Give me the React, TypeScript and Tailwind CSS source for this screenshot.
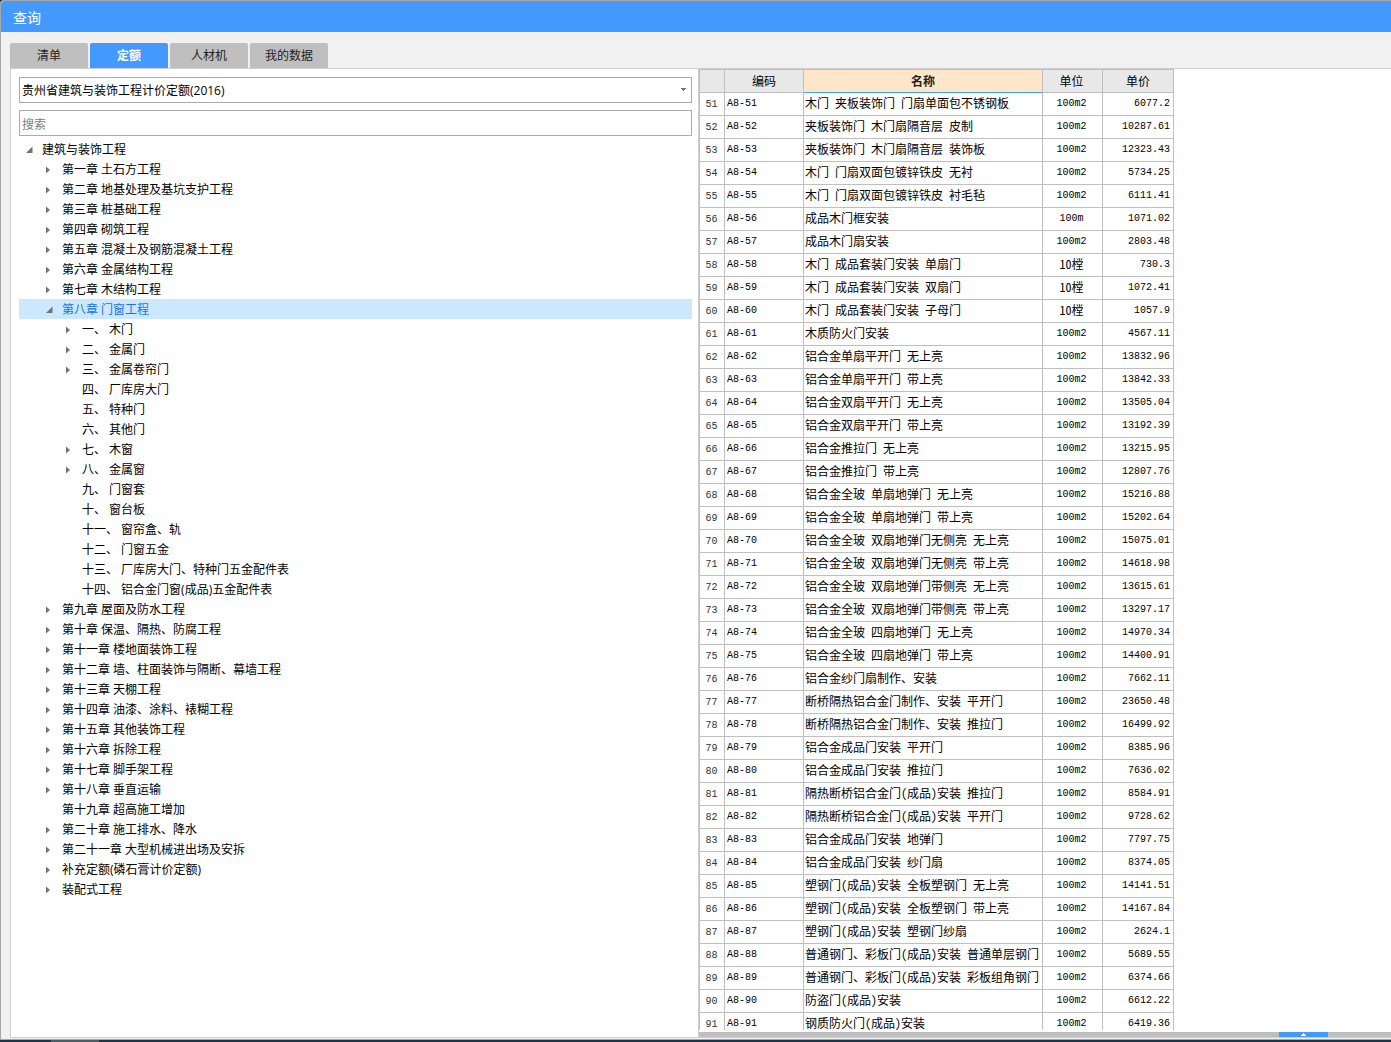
import clsx from "clsx";

const tabs = ["清单", "定额", "人材机", "我的数据"];

type Node = { label: string; level: 0 | 1 | 2; state?: "open" | "closed" };

const nodes: Node[] = [
  { label: "建筑与装饰工程", level: 0, state: "open" },
  { label: "第一章 土石方工程", level: 1, state: "closed" },
  { label: "第二章 地基处理及基坑支护工程", level: 1, state: "closed" },
  { label: "第三章 桩基础工程", level: 1, state: "closed" },
  { label: "第四章 砌筑工程", level: 1, state: "closed" },
  { label: "第五章 混凝土及钢筋混凝土工程", level: 1, state: "closed" },
  { label: "第六章 金属结构工程", level: 1, state: "closed" },
  { label: "第七章 木结构工程", level: 1, state: "closed" },
  { label: "第八章 门窗工程", level: 1, state: "open" },
  { label: "一、 木门", level: 2, state: "closed" },
  { label: "二、 金属门", level: 2, state: "closed" },
  { label: "三、 金属卷帘门", level: 2, state: "closed" },
  { label: "四、 厂库房大门", level: 2 },
  { label: "五、 特种门", level: 2 },
  { label: "六、 其他门", level: 2 },
  { label: "七、 木窗", level: 2, state: "closed" },
  { label: "八、 金属窗", level: 2, state: "closed" },
  { label: "九、 门窗套", level: 2 },
  { label: "十、 窗台板", level: 2 },
  { label: "十一、 窗帘盒、轨", level: 2 },
  { label: "十二、 门窗五金", level: 2 },
  { label: "十三、 厂库房大门、特种门五金配件表", level: 2 },
  { label: "十四、 铝合金门窗(成品)五金配件表", level: 2 },
  { label: "第九章 屋面及防水工程", level: 1, state: "closed" },
  { label: "第十章 保温、隔热、防腐工程", level: 1, state: "closed" },
  { label: "第十一章 楼地面装饰工程", level: 1, state: "closed" },
  { label: "第十二章 墙、柱面装饰与隔断、幕墙工程", level: 1, state: "closed" },
  { label: "第十三章 天棚工程", level: 1, state: "closed" },
  { label: "第十四章 油漆、涂料、裱糊工程", level: 1, state: "closed" },
  { label: "第十五章 其他装饰工程", level: 1, state: "closed" },
  { label: "第十六章 拆除工程", level: 1, state: "closed" },
  { label: "第十七章 脚手架工程", level: 1, state: "closed" },
  { label: "第十八章 垂直运输", level: 1, state: "closed" },
  { label: "第十九章 超高施工增加", level: 1 },
  { label: "第二十章 施工排水、降水", level: 1, state: "closed" },
  { label: "第二十一章 大型机械进出场及安拆", level: 1, state: "closed" },
  { label: "补充定额(磷石膏计价定额)", level: 1, state: "closed" },
  { label: "装配式工程", level: 1, state: "closed" },
];

const selected = "第八章 门窗工程";

const indent = ["pl-[3px]", "pl-[23px]", "pl-[43px]"];

// row number, name, unit, price
const rows: [number, string, string, string][] = [
  [51, "木门 夹板装饰门 门扇单面包不锈钢板", "100m2", "6077.2"],
  [52, "夹板装饰门 木门扇隔音层 皮制", "100m2", "10287.61"],
  [53, "夹板装饰门 木门扇隔音层 装饰板", "100m2", "12323.43"],
  [54, "木门 门扇双面包镀锌铁皮 无衬", "100m2", "5734.25"],
  [55, "木门 门扇双面包镀锌铁皮 衬毛毡", "100m2", "6111.41"],
  [56, "成品木门框安装", "100m", "1071.02"],
  [57, "成品木门扇安装", "100m2", "2803.48"],
  [58, "木门 成品套装门安装 单扇门", "10樘", "730.3"],
  [59, "木门 成品套装门安装 双扇门", "10樘", "1072.41"],
  [60, "木门 成品套装门安装 子母门", "10樘", "1057.9"],
  [61, "木质防火门安装", "100m2", "4567.11"],
  [62, "铝合金单扇平开门 无上亮", "100m2", "13832.96"],
  [63, "铝合金单扇平开门 带上亮", "100m2", "13842.33"],
  [64, "铝合金双扇平开门 无上亮", "100m2", "13505.04"],
  [65, "铝合金双扇平开门 带上亮", "100m2", "13192.39"],
  [66, "铝合金推拉门 无上亮", "100m2", "13215.95"],
  [67, "铝合金推拉门 带上亮", "100m2", "12807.76"],
  [68, "铝合金全玻 单扇地弹门 无上亮", "100m2", "15216.88"],
  [69, "铝合金全玻 单扇地弹门 带上亮", "100m2", "15202.64"],
  [70, "铝合金全玻 双扇地弹门无侧亮 无上亮", "100m2", "15075.01"],
  [71, "铝合金全玻 双扇地弹门无侧亮 带上亮", "100m2", "14618.98"],
  [72, "铝合金全玻 双扇地弹门带侧亮 无上亮", "100m2", "13615.61"],
  [73, "铝合金全玻 双扇地弹门带侧亮 带上亮", "100m2", "13297.17"],
  [74, "铝合金全玻 四扇地弹门 无上亮", "100m2", "14970.34"],
  [75, "铝合金全玻 四扇地弹门 带上亮", "100m2", "14400.91"],
  [76, "铝合金纱门扇制作、安装", "100m2", "7662.11"],
  [77, "断桥隔热铝合金门制作、安装 平开门", "100m2", "23650.48"],
  [78, "断桥隔热铝合金门制作、安装 推拉门", "100m2", "16499.92"],
  [79, "铝合金成品门安装 平开门", "100m2", "8385.96"],
  [80, "铝合金成品门安装 推拉门", "100m2", "7636.02"],
  [81, "隔热断桥铝合金门(成品)安装 推拉门", "100m2", "8584.91"],
  [82, "隔热断桥铝合金门(成品)安装 平开门", "100m2", "9728.62"],
  [83, "铝合金成品门安装 地弹门", "100m2", "7797.75"],
  [84, "铝合金成品门安装 纱门扇", "100m2", "8374.05"],
  [85, "塑钢门(成品)安装 全板塑钢门 无上亮", "100m2", "14141.51"],
  [86, "塑钢门(成品)安装 全板塑钢门 带上亮", "100m2", "14167.84"],
  [87, "塑钢门(成品)安装 塑钢门纱扇", "100m2", "2624.1"],
  [88, "普通钢门、彩板门(成品)安装 普通单层钢门", "100m2", "5689.55"],
  [89, "普通钢门、彩板门(成品)安装 彩板组角钢门", "100m2", "6374.66"],
  [90, "防盗门(成品)安装", "100m2", "6612.22"],
  [91, "钢质防火门(成品)安装", "100m2", "6419.36"],
];

function Arrow({ state }: { state?: "open" | "closed" }) {
  return (
    <span className="flex w-5 shrink-0 pl-1">
      {state && (
        <svg width="8" height="8" viewBox="0 0 8 8" fill="#737373">
          {state === "open" ? (
            <path d="M6.5 0.5V7H0z" />
          ) : (
            <path d="M0 0.5L4 4L0 7.5z" />
          )}
        </svg>
      )}
    </span>
  );
}

function Tree() {
  return (
    <ul role="tree" aria-label="定额章节" className="mt-[3px]">
      {nodes.map((node) => (
        <li
          key={node.label}
          role="treeitem"
          aria-level={node.level + 1}
          aria-expanded={node.state ? node.state === "open" : undefined}
          aria-selected={node.label === selected}
        >
          <button
            type="button"
            className={clsx(
              "flex h-5 w-full items-center pt-0.5 text-left whitespace-nowrap",
              indent[node.level],
              node.label === selected && "bg-[#cce8ff] text-[#1a73e8]",
            )}
          >
            <Arrow state={node.state} />
            {node.label}
          </button>
        </li>
      ))}
    </ul>
  );
}

const cell = "h-[23px] border-r border-b border-[#bfbfbf] p-0 leading-4";
const mono = "font-['Liberation_Mono','Noto_Sans_CJK_SC',monospace] text-[10px]";

function PriceTable() {
  return (
    <table className="w-[475px] table-fixed border-separate border-spacing-0 border-t border-l border-[#bfbfbf] font-['Noto_Sans_Mono_CJK_SC','Noto_Sans_CJK_SC',monospace] whitespace-nowrap">
      <colgroup>
        <col className="w-[25px]" />
        <col className="w-[79px]" />
        <col className="w-[239px]" />
        <col className="w-[60px]" />
        <col className="w-[71px]" />
      </colgroup>
      <thead>
        <tr className="bg-[#e8e8e8]">
          <td className={cell} />
          <th className={clsx(cell, "font-normal")}>编码</th>
          <th className="h-[23px] border-r border-b border-r-[#bfbfbf] border-b-[#4499ff] bg-[#ffe6c8] p-0 leading-4 font-bold text-[#222]">
            名称
          </th>
          <th className={clsx(cell, "pr-0.5 font-normal")}>单位</th>
          <th className={clsx(cell, "font-normal")}>单价</th>
        </tr>
      </thead>
      <tbody>
        {rows.map(([no, name, unit, price]) => (
          <tr key={no}>
            <td className={clsx(cell, mono, "pt-0.5 pr-px text-center text-[#333]")}>{no}</td>
            <td className={clsx(cell, mono, "pl-0.5")}>A8-{no}</td>
            <td className={clsx(cell, "pb-0.5 pl-px")}>{name}</td>
            <td
              className={clsx(
                cell,
                "pr-0.5 text-center",
                unit.endsWith("樘") ? "pb-0.5" : mono,
              )}
            >
              {unit}
            </td>
            <td className={clsx(cell, mono, "pr-[3px] text-right")}>{price}</td>
          </tr>
        ))}
      </tbody>
    </table>
  );
}

export default function App() {
  return (
    <div className="flex h-screen flex-col overflow-hidden bg-[#1f3444] font-['Open_Sans','Noto_Sans_CJK_SC',sans-serif] text-xs text-black">
      <div className="flex min-h-0 flex-1 flex-col rounded-tl-sm border-t border-b border-l border-[#a6a6a6] bg-[#f1f1f1]">
        <header className="flex h-[31px] shrink-0 items-center rounded-tl-sm bg-[#4499ff] px-3 pt-0.5">
          <h1 className="text-sm text-white">查询</h1>
        </header>
        <main className="flex min-h-0 flex-1 flex-col pt-[11px] pb-px pl-[9px]">
          <div role="tablist" className="flex h-[25px] shrink-0 gap-0.5">
            {tabs.map((tab) => (
              <button
                key={tab}
                type="button"
                role="tab"
                aria-selected={tab === "定额"}
                className={clsx(
                  "w-[78px] rounded-t-xs",
                  tab === "定额" ? "bg-[#4499ff] font-bold text-white" : "bg-[#bfbfbf] text-[#222]",
                )}
              >
                {tab}
              </button>
            ))}
          </div>
          <div className="grid min-h-0 flex-1 grid-cols-[687fr_693fr] border-t border-b border-l border-[#cfcfcf] bg-white">
            <section className="min-h-0 overflow-hidden pt-2 pr-1.5 pl-2">
              <div className="relative">
                <select
                  aria-label="定额库"
                  className="block h-[26px] w-full appearance-none border border-[#ababab] bg-white px-0.5 pt-0.5"
                >
                  <option>贵州省建筑与装饰工程计价定额(2016)</option>
                </select>
                <svg
                  className="pointer-events-none absolute top-[11px] right-1.5"
                  width="5"
                  height="3"
                  viewBox="0 0 5 3"
                  fill="#737373"
                >
                  <path d="M0 0H5V1H4V2H3V3H2V2H1V1H0z" />
                </svg>
              </div>
              <input
                type="text"
                aria-label="搜索"
                placeholder="搜索"
                className="mt-[7px] block h-[26px] w-full border border-[#ababab] px-0.5 pt-0.5 placeholder:text-[#808080]"
              />
              <Tree />
            </section>
            <section className="flex min-h-0 min-w-0 flex-col border-l border-[#cfcfcf]">
              <div className="min-h-0 flex-1 overflow-hidden">
                <PriceTable />
              </div>
              <div className="mt-0.5 flex h-[5px] shrink-0 justify-end bg-[#bfbfbf] pr-[63px]">
                <button
                  type="button"
                  aria-label="展开"
                  className="flex w-[49px] items-center justify-center bg-[#4499ff]"
                >
                  <svg width="5" height="3" viewBox="0 0 5 3" fill="#fff">
                    <path d="M2 0H3V1H4V2H5V3H0V2H1V1H2z" />
                  </svg>
                </button>
              </div>
            </section>
          </div>
        </main>
      </div>
      <footer className="h-0.5 shrink-0 pl-[51px]">
        <div className="h-full w-12 bg-[#4c5d64]" />
      </footer>
    </div>
  );
}
